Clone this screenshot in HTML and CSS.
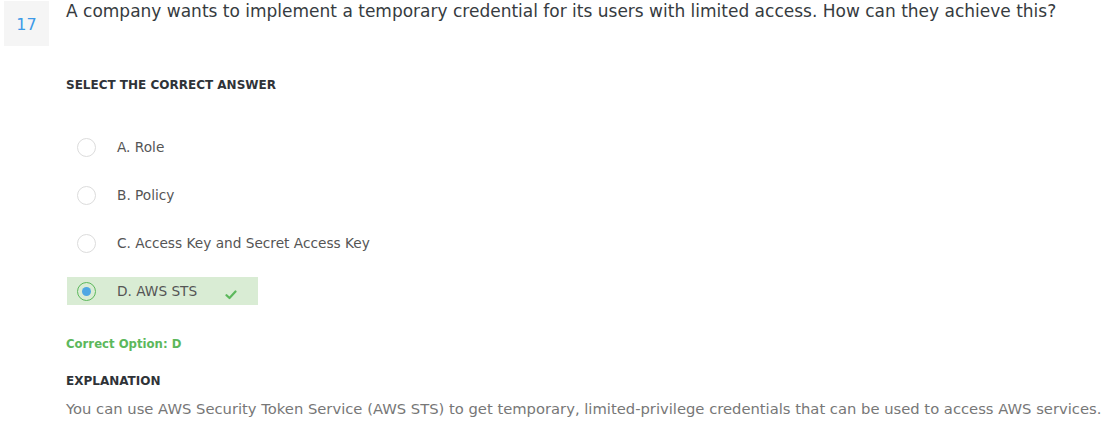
FILE: index.html
```html
<!DOCTYPE html>
<html lang="en">
<head>
<meta charset="utf-8">
<title>Question 17</title>
<link rel="stylesheet" href="styles.css">
</head>
<body>
<div class="question">
  <div class="qnum">17</div>
  <div class="qbody">
    <h2 class="qtext">A company wants to implement a temporary credential for its users with limited access. How can they achieve this?</h2>
    <h3 class="label select-label">SELECT THE CORRECT ANSWER</h3>
    <ul class="options">
      <li class="option"><span class="radio"></span><span class="otext">A. Role</span></li>
      <li class="option"><span class="radio"></span><span class="otext">B. Policy</span></li>
      <li class="option"><span class="radio"></span><span class="otext">C. Access Key and Secret Access Key</span></li>
      <li class="option selected"><span class="radio"></span><span class="otext">D. AWS STS</span>
        <svg class="check" width="12" height="10" viewBox="0 0 12 10"><path d="M1.5 5.2 L4.5 8 L10.5 1.5" fill="none" stroke="#5cb85c" stroke-width="2.2" stroke-linecap="round" stroke-linejoin="round"/></svg>
      </li>
    </ul>
    <p class="correct-note">Correct Option: D</p>
    <h3 class="label expl-label">EXPLANATION</h3>
    <p class="explanation">You can use AWS Security Token Service (AWS STS) to get temporary, limited-privilege credentials that can be used to access AWS services.</p>
  </div>
</div>
</body>
</html>
```
FILE: styles.css
```css
* { box-sizing: border-box; }
html, body { margin: 0; padding: 0; background: #fff; }
body {
  font-family: "DejaVu Sans", "Open Sans", sans-serif;
  color: #333;
  width: 1120px;
  height: 436px;
  overflow: hidden;
}
.question {
  display: flex;
  align-items: flex-start;
  gap: 17px;
  padding: 1px 0 0 4px;
}
.qnum {
  flex: none;
  width: 45px;
  height: 45px;
  background: #f5f5f5;
  color: #3d9ae8;
  font-size: 16px;
  display: flex;
  align-items: center;
  justify-content: center;
  padding-top: 1px;
}
.qbody {
  display: flex;
  flex-direction: column;
  flex: 1;
}
.qtext {
  margin: -1px 0 0;
  font-size: 17px;
  font-weight: 400;
  line-height: 22px;
  color: #363b40;
  white-space: nowrap;
}
.label {
  margin: 0;
  font-size: 12px;
  font-weight: 700;
  line-height: 16px;
  color: #2f3338;
}
.select-label { margin-top: 55px; }
.options {
  list-style: none;
  margin: 40px 0 0;
  padding: 0;
  display: flex;
  flex-direction: column;
  gap: 20px;
}
.option {
  display: flex;
  align-items: center;
  height: 28px;
  width: 191px;
  margin-left: 1px;
  padding-left: 10px;
  font-size: 13.7px;
  color: #555;
  white-space: nowrap;
}
.radio {
  flex: none;
  width: 19px;
  height: 19px;
  border-radius: 50%;
  border: 1px solid #dcdcdc;
  margin-right: 21px;
  display: flex;
  align-items: center;
  justify-content: center;
}
.option.selected { background: #d9ecd4; }
.option.selected .radio { border-color: #5cb85c; }
.option.selected .radio::after {
  content: "";
  width: 9px;
  height: 9px;
  border-radius: 50%;
  background: #4ea7e3;
}
.check { margin-left: 28px; margin-top: 8px; }
.correct-note {
  margin: 31px 0 0;
  font-size: 11.7px;
  font-weight: 700;
  line-height: 16px;
  color: #5cb85c;
}
.expl-label { margin-top: 21px; }
.explanation {
  margin: 11px 0 0;
  font-size: 14.75px;
  line-height: 18px;
  color: #777;
  white-space: nowrap;
}
```
